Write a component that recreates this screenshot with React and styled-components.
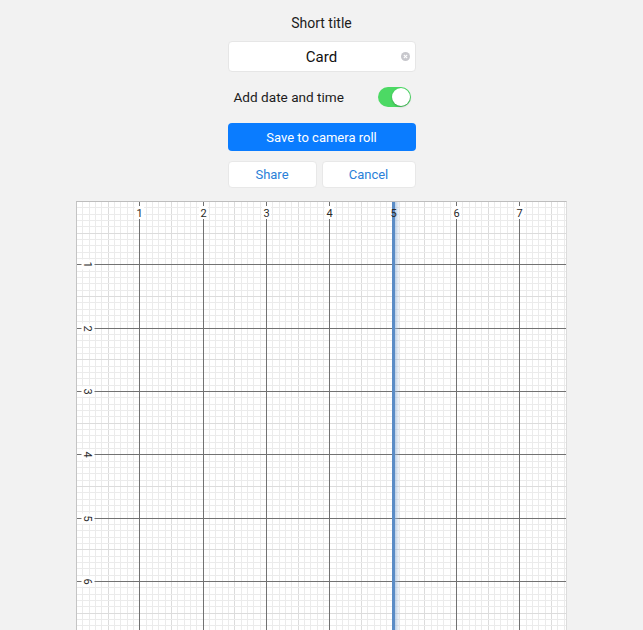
import React, { useState } from 'react';
import styled, { createGlobalStyle } from 'styled-components';

const GlobalStyle = createGlobalStyle`
  html, body {
    margin: 0;
    padding: 0;
    background: #f2f2f2;
    overflow: hidden;
    font-family: Roboto, "Liberation Sans", Arial, sans-serif;
  }
`;

const Page = styled.div`
  display: flex;
  flex-direction: column;
  align-items: center;
  padding-top: 14px;
  & > * {
    flex-shrink: 0;
  }
`;

const Title = styled.div`
  font-size: 14px;
  line-height: 18px;
  color: #1c1c1c;
`;

const Field = styled.div`
  position: relative;
  margin-top: 9px;
  width: 188px;
  height: 31px;
  background: #fff;
  border-radius: 4px;
  border: 1px solid #e6e6e6;
  box-sizing: border-box;
  display: flex;
  align-items: center;
  justify-content: center;
  font-size: 15px;
  color: #111;
`;

const ClearIcon = styled.span`
  position: absolute;
  right: 5px;
  top: 50%;
  width: 9px;
  height: 9px;
  margin-top: -4.5px;
  border-radius: 50%;
  background: #c7c7cc;
  display: flex;
  align-items: center;
  justify-content: center;
`;

const Row = styled.div`
  margin-top: 14px;
  width: 188px;
  height: 22px;
  padding: 0 5px 0 6px;
  box-sizing: border-box;
  display: flex;
  align-items: center;
  justify-content: space-between;
  font-size: 13.6px;
  color: #1c1c1c;
`;

const Toggle = styled.button`
  width: 33px;
  height: 20px;
  padding: 0;
  border: none;
  border-radius: 10px;
  background: ${(p) => (p.$on ? '#4cd964' : '#e5e5ea')};
  position: relative;
  cursor: pointer;
`;

const Knob = styled.span`
  position: absolute;
  top: 1px;
  left: ${(p) => (p.$on ? '14px' : '1px')};
  width: 18px;
  height: 18px;
  border-radius: 50%;
  background: #fff;
  box-shadow: 0 1px 2px rgba(0, 0, 0, 0.25);
`;

const PrimaryButton = styled.button`
  margin-top: 15px;
  width: 188px;
  height: 28px;
  border: none;
  border-radius: 4px;
  background: #0a7cff;
  color: #fff;
  font-family: inherit;
  font-size: 13px;
  cursor: pointer;
`;

const ButtonRow = styled.div`
  margin-top: 10px;
  width: 188px;
  display: grid;
  grid-template-columns: 89px 1fr;
  gap: 5px;
`;

const SecondaryButton = styled.button`
  height: 27px;
  border: 1px solid #e8e8e8;
  border-radius: 4px;
  background: #fff;
  color: #2a7fd8;
  font-family: inherit;
  font-size: 13px;
  cursor: pointer;
`;

const Sheet = styled.div`
  margin-top: 13px;
  width: 491px;
  height: 440px;
  background: #fff;
  border-top: 1px solid #bdbdbd;
  border-left: 1px solid #c4c4c4;
  border-right: 1px solid #dcdcdc;
  box-sizing: border-box;
  overflow: hidden;
`;

const STEP = 63.33;
const W = 491;
const H = 440;
const LABEL_FONT = 'Roboto, Arial, sans-serif';
const CURSOR_AT = 5;

function GridPaper() {
  const minor = [];
  const major = [];
  const labels = [];
  for (let k = 1; k * (STEP / 10) < W; k++) {
    const x = Math.round(k * (STEP / 10)) - 0.5;
    if (k % 10 === 0) major.push(<line key={'vx' + k} x1={x} y1={0} x2={x} y2={H} stroke="#727272" strokeWidth="1" />);
    else minor.push(<line key={'vx' + k} x1={x} y1={0} x2={x} y2={H} stroke={k % 5 === 0 ? '#dcdcdc' : '#ebebeb'} strokeWidth="1" />);
  }
  for (let k = 1; k * (STEP / 10) < H; k++) {
    const y = Math.round(k * (STEP / 10)) - 0.5;
    if (k % 10 === 0) major.push(<line key={'hy' + k} x1={0} y1={y} x2={W} y2={y} stroke="#727272" strokeWidth="1" />);
    else minor.push(<line key={'hy' + k} x1={0} y1={y} x2={W} y2={y} stroke={k % 5 === 0 ? '#dcdcdc' : '#ebebeb'} strokeWidth="1" />);
  }
  for (let n = 1; n <= 7; n++) {
    const x = Math.round(n * STEP) - 0.5;
    labels.push(
      <g key={'lx' + n}>
        {n !== CURSOR_AT && <rect x={x - 4.5} y={4} width={9} height={13} fill="#fff" />}
        <text x={x} y={14.5} fontSize="11" textAnchor="middle" fill="#2a2a2a" fontFamily={LABEL_FONT}>{n}</text>
      </g>
    );
  }
  for (let n = 1; n <= 6; n++) {
    const y = Math.round(n * STEP) - 0.5;
    labels.push(
      <g key={'ly' + n} transform={`translate(11 ${y}) rotate(90)`}>
        <rect x={-5} y={-6.5} width={10} height={13} fill="#fff" />
        <text x={0} y={4} fontSize="11" textAnchor="middle" fill="#2a2a2a" fontFamily={LABEL_FONT}>{n}</text>
      </g>
    );
  }
  const bx = Math.round(CURSOR_AT * STEP) - 2;
  return (
    <svg width={W} height={H} viewBox={`0 0 ${W} ${H}`} style={{ display: 'block' }}>
      <defs>
        <linearGradient id="glow" x1="0" x2="1" y1="0" y2="0">
          <stop offset="0" stopColor="#8fb0d6" stopOpacity="0.6" />
          <stop offset="1" stopColor="#8fb0d6" stopOpacity="0" />
        </linearGradient>
      </defs>
      {minor}
      {major}
      <rect x={bx} y={0} width={3} height={H} fill="#5a8cc6" />
      <rect x={bx + 3} y={0} width={5} height={H} fill="url(#glow)" />
      {labels}
    </svg>
  );
}

export default function App() {
  const [on, setOn] = useState(true);
  return (
    <Page>
      <GlobalStyle />
      <Title>Short title</Title>
      <Field>
        Card
        <ClearIcon>
          <svg width="5" height="5" viewBox="0 0 5 5">
            <path d="M0.8 0.8 L4.2 4.2 M4.2 0.8 L0.8 4.2" stroke="#fff" strokeWidth="1.1" />
          </svg>
        </ClearIcon>
      </Field>
      <Row>
        <span>Add date and time</span>
        <Toggle $on={on} onClick={() => setOn(!on)}>
          <Knob $on={on} />
        </Toggle>
      </Row>
      <PrimaryButton>Save to camera roll</PrimaryButton>
      <ButtonRow>
        <SecondaryButton>Share</SecondaryButton>
        <SecondaryButton>Cancel</SecondaryButton>
      </ButtonRow>
      <Sheet>
        <GridPaper />
      </Sheet>
    </Page>
  );
}
